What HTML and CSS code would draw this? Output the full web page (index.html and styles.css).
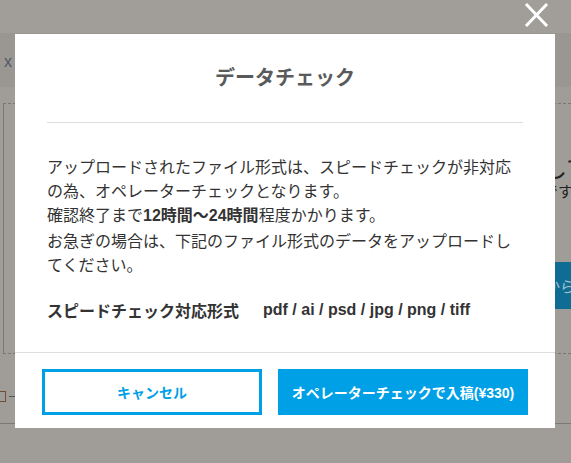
FILE: index.html
```html
<!DOCTYPE html>
<html lang="ja">
<head>
<meta charset="utf-8">
<title>データチェック</title>
<link rel="stylesheet" href="styles.css">
</head>
<body>
<div class="page">
  <div class="topstrip"></div>
  <div class="header"><span class="hx">x</span><span class="hnum">1</span></div>
  <div class="panel">
    <div class="panel-right">
      <p class="big">して</p>
      <p class="small">です</p>
      <div class="blue-btn">から</div>
    </div>
  </div>
  <div class="row"><span class="chk"></span><span class="dash"></span></div>
  <div class="rule"></div>
</div>

<button class="close" aria-label="閉じる">
  <svg width="26" height="26" viewBox="0 0 26 26"><path d="M3 2 L24 24 M24 2 L3 24" stroke="#fff" stroke-width="3" fill="none"/></svg>
</button>

<div class="modal">
  <div class="modal-head">
    <h2 class="title">データチェック</h2>
  </div>
  <div class="modal-body">
    <p class="desc">アップロードされたファイル形式は、スピードチェックが非対応の為、オペレーターチェックとなります。<br>確認終了まで<strong>12時間〜24時間</strong>程度かかります。<br>お急ぎの場合は、下記のファイル形式のデータをアップロードしてください。</p>
    <div class="formats">
      <span class="formats-label">スピードチェック対応形式</span>
      <span class="formats-list">pdf / ai / psd / jpg / png / tiff</span>
    </div>
  </div>
  <div class="modal-foot">
    <button class="btn btn-cancel">キャンセル</button>
    <button class="btn btn-primary">オペレーターチェックで入稿(¥330)</button>
  </div>
</div>
</body>
</html>
```

FILE: styles.css
```css
* { box-sizing: border-box; }
html, body { margin: 0; padding: 0; }
body {
  width: 571px;
  height: 463px;
  overflow: hidden;
  background: #a09d98;
  font-family: "Liberation Sans", "Noto Sans CJK JP", sans-serif;
  color: #333;
  position: relative;
}
p { margin: 0; }

/* dimmed page behind */
.page { width: 571px; }
.topstrip { height: 33px; background: #a19e99; }
.header {
  height: 54px;
  background: #9a9792;
  display: flex;
  align-items: center;
  padding-left: 4px;
  padding-top: 4px;
  font-size: 16px;
}
.hx { color: #4e5a66; }
.hnum { color: #b07a3a; margin-left: 3px; }
.panel {
  margin-top: 16px;
  margin-left: 3px;
  height: 251px;
  border-top: 1px dashed #7a7671;
  border-bottom: 1px dashed #7a7671;
  border-left: 1px solid #7a7671;
  display: flex;
}
.panel-right {
  margin-left: 539px;
  width: 120px;
  padding-top: 50px;
  flex: none;
}
.big { font-family: "Noto Sans CJK JP", sans-serif; font-size: 24px; line-height: 26px; color: #222; }
.small { font-family: "Noto Sans CJK JP", sans-serif; font-size: 15px; line-height: 18px; margin-top: 2px; color: #222; }
.blue-btn {
  margin-top: 62px;
  height: 47px;
  background: #0f6d94;
  color: #9fc3d4;
  font-family: "Noto Sans CJK JP", sans-serif;
  font-size: 15px;
  line-height: 47px;
  padding-left: 2px;
}
.row {
  display: flex;
  align-items: center;
  height: 20px;
  margin-top: 32px;
}
.chk {
  width: 6px;
  height: 11px;
  border: 1px solid #6e4f34;
  border-left: none;
}
.dash { width: 8px; height: 1px; background: #555; margin-left: 3px; }
.rule { margin-top: 17px; height: 1px; background: #7d7974; }

/* close */
.close {
  position: absolute;
  left: 523px;
  top: 2px;
  width: 26px;
  height: 26px;
  padding: 0;
  border: 0;
  background: none;
  display: block;
}
.close svg { display: block; }

/* modal */
.modal {
  position: absolute;
  left: 15px;
  top: 34px;
  width: 540px;
  height: 394px;
  background: #fff;
  display: flex;
  flex-direction: column;
}
.modal-head {
  margin: 0 32px;
  padding: 28px 0 30px;
  border-bottom: 1px solid #dedede;
}
.title {
  margin: 0;
  text-align: center;
  font-family: "Noto Sans CJK JP", sans-serif;
  font-size: 20px;
  line-height: 30px;
  font-weight: 700;
  color: #5a5a5a;
}
.modal-body {
  padding: 31px 32px 30px;
  font-family: "Noto Sans CJK JP", sans-serif;
  font-size: 16px;
  line-height: 24px;
  color: #333;
}
.desc strong { font-family: "Liberation Sans", "Noto Sans CJK JP", sans-serif; font-weight: 700; }
.formats {
  margin-top: 22px;
  display: flex;
  gap: 24px;
  font-weight: 700;
}
.formats-list { font-family: "Liberation Sans", sans-serif; }
.modal-foot {
  border-top: 1px solid #dedede;
  padding: 16px 27px 15px;
  display: grid;
  grid-template-columns: 220fr 250fr;
  gap: 16px;
}
.btn {
  height: 46px;
  font-family: "Liberation Sans", "Noto Sans CJK JP", sans-serif;
  font-size: 14px;
  font-weight: 700;
  margin: 0;
  padding: 0;
  border-radius: 0;
  cursor: pointer;
}
.btn-cancel {
  background: #fff;
  color: #00a0e6;
  border: 3px solid #00a0e6;
}
.btn-primary {
  background: #00a0e6;
  color: #fff;
  border: 0;
}
```
